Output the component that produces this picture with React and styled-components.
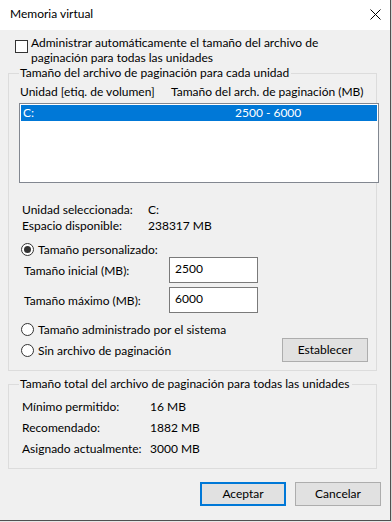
import React from "react";
import styled, { createGlobalStyle } from "styled-components";

const GlobalStyle = createGlobalStyle`
  html, body {
    margin: 0;
    padding: 0;
    background: #d4d4d4;
  }
  body {
    font-family: Lato, "Noto Sans", sans-serif;
    font-size: 12px;
    color: #000;
  }
`;

const Window = styled.div`
  width: 390px;
  height: 520px;
  background: #f0f0f0;
  border-right: 1px solid #505050;
  border-bottom: 1px solid #505050;
  display: flex;
  flex-direction: column;
`;

const TitleBar = styled.div`
  height: 30px;
  flex: none;
  background: #ffffff;
  display: flex;
  align-items: center;
  justify-content: space-between;
  padding: 0 9px 2px 10px;
  box-sizing: border-box;
  line-height: 16px;
`;

const Body = styled.div`
  padding: 5px 14px 0 8px;
  display: flex;
  flex-direction: column;
`;

const CheckRow = styled.label`
  display: flex;
  align-items: flex-start;
  margin-left: 7px;
  line-height: 15px;
`;

const CheckBox = styled.span`
  flex: none;
  width: 13px;
  height: 13px;
  box-sizing: border-box;
  border: 1px solid #333;
  background: #fff;
  margin: 5px 3px 0 0;
`;

const Group = styled.fieldset`
  margin: ${(p) => p.$top || 0}px 0 0 0;
  padding: ${(p) => p.$padTop}px 0 ${(p) => p.$padBottom}px 10px;
  border: 1px solid #dcdcdc;
  min-inline-size: 0;
  width: 369px;
  box-sizing: border-box;
`;

const Legend = styled.legend`
  padding: 0 2px 0 1px;
  margin-left: 0;
  line-height: 16px;
  white-space: nowrap;
`;

const Headers = styled.div`
  display: grid;
  grid-template-columns: 151px auto;
  padding-left: 1px;
  line-height: 16px;
  white-space: nowrap;
`;

const ListBox = styled.div`
  width: 360px;
  height: 80px;
  margin-top: 3px;
  box-sizing: border-box;
  border: 1px solid #828790;
  background: #fff;
  padding: 1px;
`;

const ListRow = styled.div`
  display: grid;
  grid-template-columns: 212px auto;
  height: 16px;
  line-height: 16px;
  padding-left: 2px;
  background: ${(p) => (p.$selected ? "#0078d7" : "transparent")};
  color: ${(p) => (p.$selected ? "#fff" : "#000")};
`;

const InfoGrid = styled.div`
  display: grid;
  grid-template-columns: ${(p) => p.$labelWidth}px auto;
  grid-auto-rows: ${(p) => p.$row}px;
  align-items: center;
  margin-top: ${(p) => p.$top || 0}px;
  padding-left: 3px;
  white-space: nowrap;
`;

const RadioRow = styled.label`
  display: flex;
  align-items: center;
  height: ${(p) => p.$h || 16}px;
  margin-top: ${(p) => p.$top || 0}px;
  margin-left: 2px;
`;

const Radio = styled.span`
  flex: none;
  width: 13px;
  height: 13px;
  box-sizing: border-box;
  border: 1px solid #333;
  border-radius: 50%;
  background: #fff;
  margin-right: 4px;
  display: flex;
  align-items: center;
  justify-content: center;
  &::after {
    content: "";
    display: ${(p) => (p.$checked ? "block" : "none")};
    width: 7px;
    height: 7px;
    border-radius: 50%;
    background: #333;
  }
`;

const FieldRow = styled.div`
  display: grid;
  grid-template-columns: 145px 89px;
  align-items: center;
  margin-top: ${(p) => p.$top || 0}px;
  margin-left: 5px;
`;

const TextBox = styled.div`
  height: 26px;
  box-sizing: border-box;
  border: 1px solid #7a7a7a;
  background: #fff;
  padding: 3px 5px 0;
  line-height: 15px;
`;

const BottomRow = styled.div`
  display: flex;
  align-items: center;
  justify-content: space-between;
  height: 24px;
  margin-top: 1px;
  padding-right: 8px;
`;

const Button = styled.button`
  width: 86px;
  height: 24px;
  box-sizing: border-box;
  font: inherit;
  color: #000;
  background: #e1e1e1;
  border: ${(p) => (p.$default ? "2px solid #0078d7" : "1px solid #adadad")};
  padding: 0;
  line-height: 16px;
`;

const Actions = styled.div`
  display: flex;
  justify-content: flex-end;
  gap: 9px;
  margin: 13px -5px 0 0;
`;

const Backdrop = styled.div`
  height: 1px;
  width: 391px;
  background: #e6e6e6;
`;

const CloseIcon = () => (
  <svg width="11" height="11" viewBox="0 0 11 11">
    <path d="M0.5 0.5 L10.5 10.5 M10.5 0.5 L0.5 10.5" stroke="#000" strokeWidth="1" fill="none" />
  </svg>
);

export default function App() {
  return (
    <>
      <GlobalStyle />
      <Window>
        <TitleBar>
          <span>Memoria virtual</span>
          <CloseIcon />
        </TitleBar>
        <Body>
          <CheckRow>
            <CheckBox />
            <span>
              Administrar automáticamente el tamaño del archivo de
              <br />
              paginación para todas las unidades
            </span>
          </CheckRow>

          <Group $padTop={3} $padBottom={8}>
            <Legend>Tamaño del archivo de paginación para cada unidad</Legend>
            <Headers>
              <span>Unidad [etiq. de volumen]</span>
              <span>Tamaño del arch. de paginación (MB)</span>
            </Headers>
            <ListBox>
              <ListRow $selected>
                <span>C:</span>
                <span>2500 - 6000</span>
              </ListRow>
            </ListBox>

            <InfoGrid $labelWidth={126} $row={16} $top={18}>
              <span>Unidad seleccionada:</span>
              <span>C:</span>
              <span>Espacio disponible:</span>
              <span>238317 MB</span>
            </InfoGrid>

            <RadioRow $top={9} $h={15}>
              <Radio $checked />
              Tamaño personalizado:
            </RadioRow>
            <FieldRow>
              <span>Tamaño inicial (MB):</span>
              <TextBox>2500</TextBox>
            </FieldRow>
            <FieldRow $top={4}>
              <span>Tamaño máximo (MB):</span>
              <TextBox>6000</TextBox>
            </FieldRow>

            <RadioRow $top={8}>
              <Radio />
              Tamaño administrado por el sistema
            </RadioRow>
            <BottomRow>
              <RadioRow>
                <Radio />
                Sin archivo de paginación
              </RadioRow>
              <Button>Establecer</Button>
            </BottomRow>
          </Group>

          <Group $top={5} $padTop={4} $padBottom={9}>
            <Legend>Tamaño total del archivo de paginación para todas las unidades</Legend>
            <InfoGrid $labelWidth={128} $row={21}>
              <span>Mínimo permitido:</span>
              <span>16 MB</span>
              <span>Recomendado:</span>
              <span>1882 MB</span>
              <span>Asignado actualmente:</span>
              <span>3000 MB</span>
            </InfoGrid>
          </Group>

          <Actions>
            <Button $default>Aceptar</Button>
            <Button>Cancelar</Button>
          </Actions>
        </Body>
      </Window>
      <Backdrop />
    </>
  );
}
